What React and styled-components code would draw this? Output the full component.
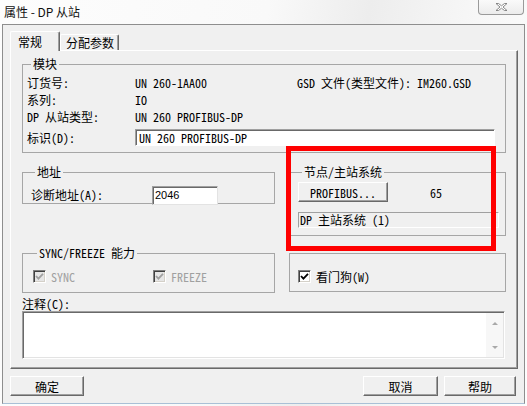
import React from "react";
import styled, { createGlobalStyle } from "styled-components";

const GlobalStyle = createGlobalStyle`
  html, body {
    margin: 0;
    padding: 0;
  }
  body {
    width: 527px;
    height: 406px;
    overflow: hidden;
    background: linear-gradient(100deg, #fdfdfd 0%, #f9f9f9 45%, #ededed 62%, #f7f7f7 80%, #fdfdfd 100%);
    font-family: "Noto Sans Mono CJK SC", "Noto Sans CJK SC", monospace;
    font-size: 12px;
    color: #000;
  }
  * {
    box-sizing: border-box;
  }
`;

const App = () => {
  return (
    <Page>
      <GlobalStyle />
      <TitleBar>
        <Title>属性 - DP 从站</Title>
        <CloseButton>
          <svg width="13" height="10" viewBox="0 0 13 10">
            <path
              d="M1 1.5 L3.5 1.5 L6.5 3.8 L9.5 1.5 L12 1.5 L8 5 L12 8.5 L9.5 8.5 L6.5 6.2 L3.5 8.5 L1 8.5 L5 5 Z"
              fill="#fff"
              stroke="#7d7d7d"
              strokeWidth="0.9"
              strokeLinejoin="round"
            />
          </svg>
        </CloseButton>
      </TitleBar>

      <Frame>
        <TabStrip>
          <Tab $active>常规</Tab>
          <Tab>分配参数</Tab>
        </TabStrip>

        <Panel>
          <Group $pad="3px 4px 6px">
            <Legend>模块</Legend>
            <InfoGrid>
              <Label>订货号:</Label>
              <span>UN 260-1AA00</span>
              <span>GSD 文件(类型文件): IM260.GSD</span>
              <Label>系列:</Label>
              <span>IO</span>
              <Label>DP 从站类型:</Label>
              <span>UN 260 PROFIBUS-DP</span>
            </InfoGrid>
            <FieldRow>
              <FieldLabel $w={108}>标识(D):</FieldLabel>
              <TextInput $w={360}>UN 260 PROFIBUS-DP</TextInput>
            </FieldRow>
          </Group>

          <GroupRow $cols="253px 216px" $gap={15} $top={12}>
            <Group $pad="3px 8px 0">
              <Legend>地址</Legend>
              <FieldRow>
                <FieldLabel $w={121}>诊断地址(A):</FieldLabel>
                <NumberInput>2046</NumberInput>
              </FieldRow>
            </Group>
            <Group $pad="3px 7px 7px">
              <Legend>节点/主站系统</Legend>
              <NodeLine>
                <Button $w={90} $h={20}>PROFIBUS...</Button>
                <NodeNumber>65</NodeNumber>
              </NodeLine>
              <StaticField>DP 主站系统 (1)</StaticField>
            </Group>
          </GroupRow>

          <GroupRow $cols="253px 217px" $gap={14} $top={10}>
            <Group $pad="10px 10px 9px">
              <Legend>SYNC/FREEZE 能力</Legend>
              <CheckLine>
                <CheckItem $w={120} $disabled>
                  <CheckBox checked disabled />
                  SYNC
                </CheckItem>
                <CheckItem $disabled>
                  <CheckBox checked disabled />
                  FREEZE
                </CheckItem>
              </CheckLine>
            </Group>
            <Group $pad="16px 8px 8px" $noLegend>
              <CheckLine>
                <CheckItem>
                  <CheckBox checked />
                  看门狗(W)
                </CheckItem>
              </CheckLine>
            </Group>
          </GroupRow>

          <CommentLabel>注释(C):</CommentLabel>
          <CommentBox>
            <CommentText />
            <ScrollTrack>
              <Arrow $up />
              <Arrow />
            </ScrollTrack>
          </CommentBox>
        </Panel>

        <ButtonBar>
          <Button $w={74} $h={20}>确定</Button>
          <Spacer />
          <Button $w={75} $h={20}>取消</Button>
          <Button $w={72} $h={20}>帮助</Button>
        </ButtonBar>
      </Frame>

      <Highlight />
    </Page>
  );
};

const CheckBox = ({ checked, disabled }) => (
  <Box $disabled={disabled}>
    {checked && (
      <svg width="9" height="9" viewBox="0 0 9 9">
        <path
          d="M1 4 L3.4 6.6 L8 1.8"
          fill="none"
          stroke={disabled ? "#a0a0a0" : "#000"}
          strokeWidth="1.8"
        />
      </svg>
    )}
  </Box>
);

const Page = styled.div`
  position: relative;
  width: 527px;
  height: 406px;
`;

const TitleBar = styled.div`
  height: 24px;
  display: flex;
  justify-content: space-between;
  align-items: flex-start;
`;

const Title = styled.div`
  padding-left: 4px;
  line-height: 24px;
  font-family: "Noto Sans CJK SC", sans-serif;
  font-size: 12px;
  color: #111;
`;

const CloseButton = styled.div`
  width: 46px;
  height: 16px;
  margin: -1px 3px 0 0;
  display: flex;
  align-items: center;
  justify-content: center;
  border: 1px solid #9a9a9a;
  border-top: none;
  border-radius: 0 0 4px 4px;
  background: linear-gradient(#fbfbfb, #ececec);
`;

const Frame = styled.div`
  margin-left: 2px;
  width: 523px;
  height: 380px;
  border: 1px solid #8e8e8e;
  border-bottom-color: #a9c0d6;
  background: #f0f0f0;
  display: flex;
  flex-direction: column;
`;

const TabStrip = styled.div`
  height: 25px;
  padding-left: 7px;
  display: flex;
  align-items: flex-end;
`;

const Tab = styled.div`
  position: relative;
  z-index: ${(p) => (p.$active ? 1 : 0)};
  height: ${(p) => (p.$active ? "20px" : "16px")};
  margin-bottom: ${(p) => (p.$active ? "-1px" : "0")};
  padding: ${(p) => (p.$active ? "3px 0 0 7px" : "1px 0 0 5px")};
  width: ${(p) => (p.$active ? "50px" : "59px")};
  background: #f0f0f0;
  border: 1px solid;
  border-color: #fff #696969 transparent #fff;
  border-bottom: none;
  box-shadow: inset -1px 0 #a0a0a0;
  border-radius: 2px 2px 0 0;
  line-height: 14px;
  font-size: 12px;
`;

const Panel = styled.div`
  margin-left: 7px;
  width: 508px;
  height: 319px;
  padding: 6px 11px 0;
  border: 1px solid;
  border-color: #fff #696969 #696969 #fff;
  box-shadow: inset -1px -1px #a0a0a0;
  display: flex;
  flex-direction: column;
`;

const Group = styled.fieldset`
  margin: ${(p) => (p.$noLegend ? "7px 0 0" : "0")};
  min-width: 0;
  padding: ${(p) => p.$pad};
  border: 1px solid #a6a6a6;
  border-radius: 0;
`;

const Legend = styled.legend`
  margin-left: 4px;
  padding: 0 2px;
  line-height: 14px;
  font-size: 12px;
`;

const InfoGrid = styled.div`
  display: grid;
  grid-template-columns: 108px 162px 1fr;
  grid-auto-rows: 17px;
  align-items: center;
  white-space: nowrap;
`;

const Label = styled.span`
  grid-column: 1;
`;

const FieldRow = styled.div`
  margin-top: 3px;
  height: 18px;
  display: flex;
  align-items: center;
  white-space: nowrap;
`;

const FieldLabel = styled.span`
  width: ${(p) => p.$w}px;
  flex: none;
`;

const TextInput = styled.div`
  width: ${(p) => p.$w}px;
  height: 17px;
  padding-left: 3px;
  line-height: 15px;
  background: #fff;
  border: 1px solid;
  border-color: #a0a0a0 #fff #fff #a0a0a0;
  box-shadow: inset 1px 1px #696969;
  white-space: nowrap;
`;

const NumberInput = styled.div`
  width: 66px;
  height: 19px;
  margin-top: 2px;
  padding-left: 2px;
  line-height: 17px;
  background: #fff;
  border: 1px solid;
  border-color: #a0a0a0 #e3e3e3 #e3e3e3 #a0a0a0;
  box-shadow: inset 1px 1px #696969;
  font-family: "Liberation Sans", sans-serif;
  font-size: 11px;
`;

const GroupRow = styled.div`
  margin-top: ${(p) => p.$top}px;
  display: grid;
  grid-template-columns: ${(p) => p.$cols};
  column-gap: ${(p) => p.$gap}px;
  align-items: start;
`;

const NodeLine = styled.div`
  display: flex;
  align-items: center;
`;

const NodeNumber = styled.span`
  margin-left: 42px;
`;

const StaticField = styled.div`
  margin-top: 10px;
  width: 201px;
  height: 16px;
  padding-left: 1px;
  line-height: 14px;
  border: 1px solid;
  border-color: #a0a0a0 #fff #fff #a0a0a0;
  white-space: nowrap;
`;

const Button = styled.div`
  width: ${(p) => p.$w}px;
  height: ${(p) => p.$h}px;
  flex: none;
  display: flex;
  align-items: center;
  justify-content: center;
  background: #f0f0f0;
  border: 1px solid;
  border-color: #fff #696969 #696969 #fff;
  box-shadow: inset -1px -1px #a0a0a0;
  font-size: 12px;
  white-space: nowrap;
`;

const CheckLine = styled.div`
  height: 13px;
  display: flex;
  align-items: center;
`;

const CheckItem = styled.label`
  width: ${(p) => (p.$w ? `${p.$w}px` : "auto")};
  display: flex;
  align-items: center;
  gap: 5px;
  color: ${(p) => (p.$disabled ? "#a0a0a0" : "#000")};
  white-space: nowrap;
`;

const Box = styled.span`
  width: 13px;
  height: 13px;
  flex: none;
  display: flex;
  align-items: center;
  justify-content: center;
  background: ${(p) => (p.$disabled ? "#e6e6e6" : "#fff")};
  border: 1px solid;
  border-color: #808080 #fff #fff #808080;
  box-shadow: inset 1px 1px #404040, inset -1px -1px #d4d0c8;
`;

const CommentLabel = styled.div`
  margin-top: 4px;
  line-height: 13px;
`;

const CommentBox = styled.div`
  margin-top: 1px;
  width: 483px;
  height: 48px;
  display: flex;
  background: #fff;
  border: 1px solid;
  border-color: #a0a0a0 #fff #fff #a0a0a0;
  box-shadow: inset 1px 1px #696969, inset -1px -1px #e3e3e3;
`;

const CommentText = styled.div`
  flex: 1;
`;

const ScrollTrack = styled.div`
  width: 17px;
  margin: 1px 1px 1px 0;
  padding: 9px 0 8px;
  display: flex;
  flex-direction: column;
  align-items: center;
  justify-content: space-between;
  background: #f7f7f7;
`;

const Arrow = styled.span`
  width: 0;
  height: 0;
  border-left: 3px solid transparent;
  border-right: 3px solid transparent;
  ${(p) =>
    p.$up
      ? "border-bottom: 3px solid #a9a9a9;"
      : "border-top: 3px solid #a9a9a9;"}
`;

const ButtonBar = styled.div`
  margin-top: 7px;
  padding: 0 8px 0 7px;
  display: flex;
  gap: 6px;
`;

const Spacer = styled.div`
  flex: 1;
`;

const Highlight = styled.div`
  position: absolute;
  left: 286px;
  top: 146px;
  width: 210px;
  height: 105px;
  border: 5px solid #ff0000;
  pointer-events: none;
`;

export default App;
